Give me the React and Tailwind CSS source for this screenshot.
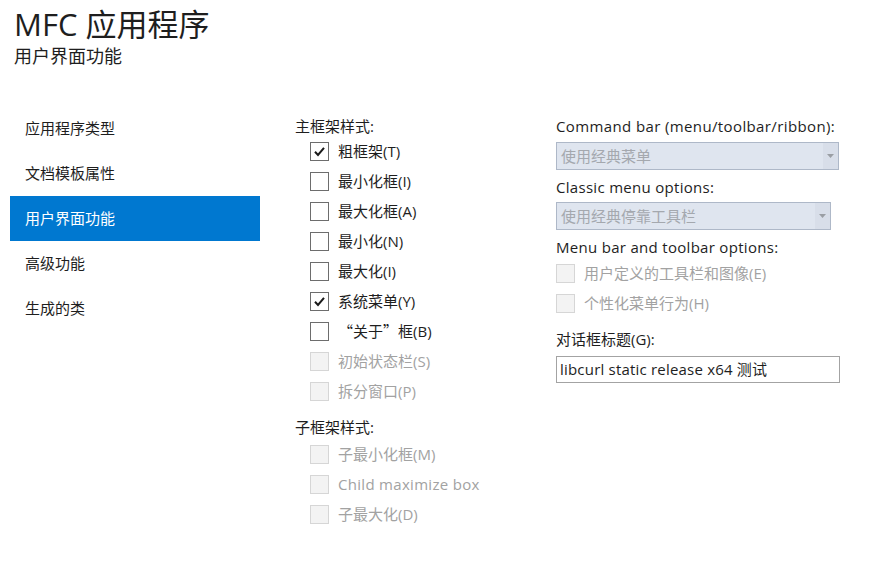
import React from "react";

const F = "font-['Open_Sans','Noto_Sans_CJK_SC',sans-serif]";
const CJK = "font-['Noto_Sans_CJK_SC',sans-serif]";

function Box({ checked, disabled }) {
  return (
    <div
      className={
        "w-[19px] h-[19px] shrink-0 border flex items-center justify-center " +
        (disabled ? "border-[#d6d6d6] bg-[#f3f3f3]" : "border-[#6d6d6d] bg-white")
      }
    >
      {checked && (
        <svg width="13" height="13" viewBox="0 0 13 13">
          <path d="M2 6.8 L5 10 L11 2.8" fill="none" stroke="#1a1a1a" strokeWidth="2" />
        </svg>
      )}
    </div>
  );
}

function Row({ label, checked, disabled, indent = true, latin }) {
  return (
    <div className={"h-[30px] flex items-center gap-[9px] " + (indent ? "pl-[15px]" : "")}>
      <Box checked={checked} disabled={disabled} />
      <span
        className={
          "text-[15px] leading-5 " +
          (latin ? "tracking-[0.3px] " : "") +
          (disabled ? "text-[#a2a2a2]" : "text-[#1e1e1e]")
        }
      >
        {label}
      </span>
    </div>
  );
}

function Select({ value, w }) {
  return (
    <div className={"h-[28px] border border-[#aeb8c8] bg-[#dfe5ef] flex " + w}>
      <div className="flex-1 flex items-center pl-[4px] text-[15px] text-[#a4a8ae]">{value}</div>
      <div className="w-[15px] bg-[#d8dee9] flex items-center justify-center">
        <svg width="7" height="4" viewBox="0 0 7 4">
          <path d="M0 0 L7 0 L3.5 4 Z" fill="#9a9ea4" />
        </svg>
      </div>
    </div>
  );
}

export default function App() {
  const sidebar = ["应用程序类型", "文档模板属性", "用户界面功能", "高级功能", "生成的类"];
  return (
    <div className={"w-[892px] h-[565px] bg-white text-[#1e1e1e] " + F}>
      <div className="pl-[14px] pt-[4px]">
        <div className="text-[31px] leading-[40px] text-[#1e1e1e]">MFC 应用程序</div>
        <div className="text-[18px] leading-[24px] text-[#1e1e1e]">用户界面功能</div>
      </div>
      <div className="flex mt-[38px]">
        <div className="w-[250px] ml-[10px] shrink-0">
          {sidebar.map((s, i) => (
            <div
              key={s}
              className={
                "h-[45px] flex items-center pl-[15px] text-[15px] " +
                (i === 2 ? "bg-[#0078d0] text-white" : "text-[#1e1e1e]")
              }
            >
              {s}
            </div>
          ))}
        </div>
        <div className="ml-[35px] w-[261px] shrink-0 pt-[10px]">
          <div className="h-5 text-[15px] leading-5">主框架样式:</div>
          <Row label="粗框架(T)" checked />
          <Row label="最小化框(I)" />
          <Row label="最大化框(A)" />
          <Row label="最小化(N)" />
          <Row label="最大化(I)" />
          <Row label="系统菜单(Y)" checked />
          <Row
            label={
              <>
                <span className={CJK}>“关于”</span>框(B)
              </>
            }
          />
          <Row label="初始状态栏(S)" disabled />
          <Row label="拆分窗口(P)" disabled />
          <div className="h-5 text-[15px] leading-5 mt-[11px]">子框架样式:</div>
          <div className="mt-[2px]">
            <Row label="子最小化框(M)" disabled />
            <Row label="Child maximize box" disabled latin />
            <Row label="子最大化(D)" disabled />
          </div>
        </div>
        <div className="w-[290px] shrink-0 pt-[10px]">
          <div className="h-5 text-[15px] leading-5 tracking-[0.38px]">Command bar (menu/toolbar/ribbon):</div>
          <div className="mt-[6px]">
            <Select value="使用经典菜单" w="w-[283px]" />
          </div>
          <div className="h-5 text-[15px] leading-5 mt-[7px] tracking-[0.3px]">Classic menu options:</div>
          <div className="mt-[5px]">
            <Select value="使用经典停靠工具栏" w="w-[275px]" />
          </div>
          <div className="h-5 text-[15px] leading-5 mt-[7px] tracking-[0.3px]">Menu bar and toolbar options:</div>
          <div className="mt-[1px]">
            <Row label="用户定义的工具栏和图像(E)" disabled indent={false} />
            <Row label="个性化菜单行为(H)" disabled indent={false} />
          </div>
          <div className="h-5 text-[15px] leading-5 mt-[11px]">对话框标题(G):</div>
          <div className="mt-[7px] w-[284px] h-[27px] border border-[#a3a3a3] bg-white flex items-center pl-[3px] text-[15px] tracking-[0.2px]">
            libcurl static release x64 测试
          </div>
        </div>
      </div>
    </div>
  );
}
